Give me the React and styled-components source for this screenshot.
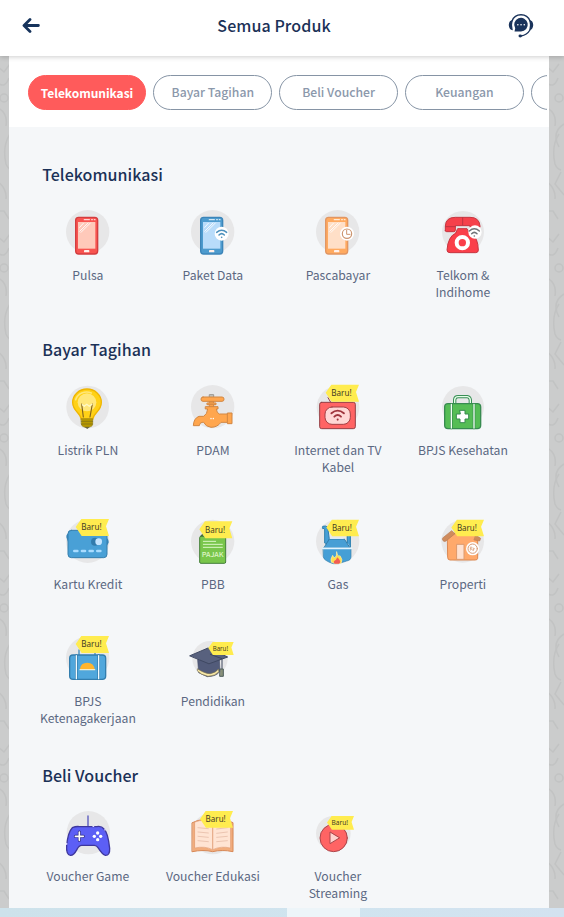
import React from "react";
import styled, { createGlobalStyle } from "styled-components";

const GlobalStyle = createGlobalStyle`
  * { box-sizing: border-box; }
  html, body { margin: 0; padding: 0; overflow: hidden; }
  body { font-family: "Noto Sans CJK SC", "Open Sans", sans-serif; background: #cbcccc; }
`;

const Page = styled.div`
  display: flex;
  flex-direction: column;
  width: 564px;
  height: 917px;
  overflow: hidden;
`;

const Header = styled.header`
  display: flex;
  flex: none;
  align-items: center;
  justify-content: space-between;
  height: 56px;
  padding: 0 30px 6px 22px;
  background: #fff;
  box-shadow: 0 1px 5px rgba(0, 0, 0, 0.2);
  z-index: 1;
`;

const HeaderTitle = styled.h1`
  margin: 0;
  font-size: 16px;
  font-weight: 500;
  line-height: 24px;
  letter-spacing: 0.08px;
  color: #1b3157;
`;

const Body = styled.div`
  display: grid;
  grid-template-columns: 9px 540px 15px;
  flex: none;
  height: 852px;
  overflow: hidden;
`;

const Doodles = styled.svg`
  display: block;
  width: 100%;
  height: 852px;
  fill: none;
  stroke: #c2c3c3;
  stroke-width: 1.5;
`;

const Content = styled.main`
  height: 852px;
  overflow: hidden;
  background: #f5f7f9;
`;

const Tabs = styled.nav`
  display: flex;
  gap: 7px;
  height: 71px;
  padding: 19px 0 0 18.6px;
  border-right: 2px solid #fff;
  background: #fff;
  overflow: hidden;
`;

const Tab = styled.button`
  flex: none;
  width: 118.8px;
  height: 35px;
  padding: 0;
  border: 1px solid ${(p) => (p.$active ? "#ff5b5b" : "#8694a5")};
  border-radius: 18px;
  background: ${(p) => (p.$active ? "#ff5b5b" : "#fff")};
  color: ${(p) => (p.$active ? "#fff" : "#8b98ab")};
  font-family: inherit;
  font-size: ${(p) => (p.$active ? "12px" : "12.2px")};
  font-weight: ${(p) => (p.$active ? 700 : 500)};
  letter-spacing: ${(p) => (p.$active ? "-0.05px" : "0")};
  line-height: 33px;
`;

const Section = styled.section`
  padding: 36px 15px 0 16.4px;
  &:first-of-type { padding-top: 35px; }
`;

const SectionTitle = styled.h2`
  margin: 0 0 24px 16.8px;
  font-size: 16px;
  font-weight: 500;
  line-height: 24px;
  letter-spacing: 0.04px;
  color: #1b3157;
`;

const Grid = styled.div`
  display: grid;
  grid-template-columns: repeat(4, 125px);
  row-gap: 43px;
`;

const Item = styled.div`
  display: flex;
  flex-direction: column;
  align-items: center;
  gap: 13px;
`;

const Picture = styled.svg`
  display: block;
  width: 60px;
  height: 44px;
  overflow: visible;
  fill: none;
  stroke-linejoin: round;
  stroke-linecap: round;
`;

const BadgeText = styled.text`
  font-family: "Noto Sans", "Open Sans", sans-serif;
  fill: #3f3b26;
  stroke: none;
`;

const TaxText = styled.text`
  font-family: "Noto Sans CJK SC", sans-serif;
  font-weight: 500;
  fill: #dff5c6;
`;

const Label = styled.div`
  width: 112px;
  font-size: 12.2px;
  line-height: 17px;
  text-align: center;
  white-space: pre-line;
  color: #5b6882;
`;

const BottomBar = styled.footer`
  display: grid;
  grid-template-columns: 287px 73px 1fr;
  flex: none;
  height: 9px;
  background: linear-gradient(90deg, #cde2eb, #d0e4ef 60%, #d3e2f0);
`;

const BottomThumb = styled.div`
  grid-column: 2;
  background: #edf5f9;
`;

const Disc = ({ cx = 173, cy = 95, r = 65 }) => <circle cx={cx} cy={cy} r={r} fill="#e7e7e8" />;

const Badge = ({ x, y, s = 1 }) => (
  <g transform={`translate(${x} ${y}) scale(${s})`}>
    <path d="M17 0H100L91 22L100 51H18L0 24Z" fill="#ffec4f" />
    <BadgeText x="17" y="34" fontSize="25.5" textLength="61" lengthAdjust="spacingAndGlyphs">Baru!</BadgeText>
  </g>
);

const Phone = ({ dark, edge, glass, x = 0 }) => (
  <g transform={`translate(${x} 0)`}>
    <rect x="137" y="52" width="66" height="110" rx="9" fill={edge} stroke={dark} strokeWidth="4" />
    <path d="M144 66H196V146H144Z" fill={glass} />
    <path d="M163 59H178M185 59H187M193 59H195" stroke="#fff" strokeWidth="4" opacity=".75" />
    <path d="M149 82L160 70M149 94L174 69M153 97L181 69" stroke="#fff" strokeWidth="3" opacity=".85" />
    <rect x="162" y="150" width="16" height="7" rx="2" fill="#fff0eb" />
  </g>
);

const Wifi = ({ x, y, color, s = 1, w = 4.5 }) => (
  <g transform={`translate(${x} ${y}) scale(${s})`} stroke={color} strokeWidth={w}>
    <path d="M-15 -4Q0 -17 15 -4M-8 4Q0 -4 8 4" />
    <circle cx="0" cy="11" r="2.5" fill={color} stroke="none" />
  </g>
);

const PhoneArt = () => (
  <Picture viewBox="84 30 180 132">
    <Disc />
    <Phone dark="#d33d3f" edge="#f85450" glass="#ffc9ba" />
  </Picture>
);

const DataArt = () => (
  <Picture viewBox="459 30 180 132">
    <Disc cx={548} />
    <Phone x={375} dark="#3c85b9" edge="#4d9bce" glass="#b9dcfa" />
    <circle cx="575" cy="101" r="21" fill="#fff" />
    <Wifi x={575} y={101} color="#4d91bd" />
  </Picture>
);

const PostpaidArt = () => (
  <Picture viewBox="84 30 180 132">
    <Disc />
    <Phone dark="#e19663" edge="#ffaa60" glass="#ffdfc7" />
    <circle cx="201" cy="101" r="21" fill="#fff" />
    <circle cx="201" cy="101" r="14" stroke="#cc946f" strokeWidth="3.5" />
    <path d="M200 91V103H210" stroke="#cc946f" strokeWidth="3" />
  </Picture>
);

const TelephoneArt = () => (
  <Picture viewBox="459 30 180 132">
    <Disc cx={549} cy={96} r={63} />
    <path d="M534 86H561Q563 96 574 101Q594 112 595 150Q595 158 587 158H510Q501 158 501 150Q504 110 526 100Z" fill="#fa3f4a" stroke="#c63540" strokeWidth="3" />
    <path d="M496 92V78Q497 52 526 52H570Q598 52 600 78V82H570V77H526V91Q526 95 521 95H500Q496 95 496 92Z" fill="#f6414b" stroke="#c63540" strokeWidth="3" />
    <path d="M548 53V75M497 80H526" stroke="#bd3540" strokeWidth="3" />
    <circle cx="547" cy="128" r="17" fill="#fa3f4a" stroke="#fff" strokeWidth="12" />
    <circle cx="585" cy="96" r="20" fill="#fff" />
    <Wifi x={583} y={97} color="#6f7478" />
  </Picture>
);

const BulbArt = () => (
  <Picture viewBox="84 150 180 132">
    <Disc cy={216} r={64} />
    <path d="M154 253C152 233 128 230 128 202A43 40 0 0 1 214 202C214 230 190 233 188 253Z" fill="#ffd116" stroke="#efb500" strokeWidth="4" />
    <path d="M137 194A34 31 0 0 1 184 174" stroke="#ffe67a" strokeWidth="5" />
    <ellipse cx="171" cy="202" rx="28" ry="27" fill="#ffe77b" />
    <path d="M160 246L155 207M180 246L187 207" stroke="#816221" strokeWidth="3.5" />
    <path d="M157 209L163 214L170 208L178 214L186 208" stroke="#fff8c6" strokeWidth="4" />
    <path d="M154 251H188V268Q187 275 179 276H163Q155 275 154 268Z" fill="#b79900" stroke="#958116" strokeWidth="2" />
    <path d="M154 259H188M154 267H187" stroke="#786b1c" strokeWidth="2" />
    <path d="M163 276H179L172 282Z" fill="#69653b" />
  </Picture>
);

const TapArt = () => (
  <Picture viewBox="459 150 180 132">
    <Disc cx={548} cy={215} />
    <g fill="#ffa64e" stroke="#d28743" strokeWidth="3">
      <path d="M539 179H551V191H539Z" fill="#c4c3bd" stroke="#9b9690" />
      <path d="M539 198H551V217H539Z" />
      <rect x="513" y="186" width="69" height="13" rx="6" />
      <path d="M532 204H558V209H532Z" />
      <path d="M527 215H564V222H559Q560 234 568 237H592V234H606V266H592V262H573Q562 277 543 277Q527 275 521 262H516Q508 264 508 272H490Q491 250 507 244H521Q532 237 533 222H527Z" />
      <path d="M592 238V262" />
    </g>
    <path d="M543 250V251M550 250V251" stroke="#fff" strokeWidth="4" />
  </Picture>
);

const InternetArt = () => (
  <Picture viewBox="84 30 180 132">
    <Disc cx={174} cy={97} r={64} />
    <rect x="119" y="82" width="107" height="79" rx="6" fill="#ff6464" stroke="#933f45" strokeWidth="3" />
    <rect x="135" y="96" width="76" height="52" rx="21" fill="#ffd7d5" stroke="#a54044" strokeWidth="3" />
    <Wifi x={173} y={120} color="#9e343c" s={1.25} />
    <path d="M151 80L144 68" stroke="#933f45" strokeWidth="3" />
    <Badge x={137} y={29} />
  </Picture>
);

const HealthArt = () => (
  <Picture viewBox="459 30 180 132">
    <Disc cx={549} cy={96} r={63} />
    <path d="M524 86V74Q525 65 534 65H562Q570 66 571 75V86" stroke="#398e55" strokeWidth="10" />
    <path d="M524 86V74Q525 65 534 65H562Q570 66 571 75V86" stroke="#e6ffe9" strokeWidth="4" />
    <rect x="494" y="86" width="108" height="75" rx="10" fill="#55bd55" stroke="#378b50" strokeWidth="4" />
    <path d="M514 88V159M582 88V159" stroke="#378b50" strokeWidth="8" />
    <path d="M514 88V159M582 88V159" stroke="#effff0" strokeWidth="4" />
    <path d="M540 106H555V117H566V132H555V143H540V132H529V117H540Z" fill="#fff" stroke="#378b50" strokeWidth="3" />
  </Picture>
);

const CardArt = () => (
  <Picture viewBox="84 27 180 132">
    <Disc cy={94} />
    <path d="M120 70Q108 70 109 82L120 112ZM227 82Q237 88 236 98L228 112Z" fill="#3687bd" />
    <rect x="114" y="61" width="117" height="82" rx="10" fill="#49a0d6" stroke="#367eac" strokeWidth="3" />
    <circle cx="195" cy="95" r="12" fill="#327cad" />
    <circle cx="206" cy="95" r="10" fill="#c6e5ff" />
    <path d="M133 123H142M156 123H165M179 123H188M202 123H211" stroke="#a9dcff" strokeWidth="8" />
    <Badge x={137} y={27} />
  </Picture>
);

const TaxArt = () => (
  <Picture viewBox="459 27 180 132">
    <Disc cx={548} cy={94} />
    <path d="M509 80L517 71L523 80" fill="#45643a" />
    <rect x="509" y="79" width="78" height="81" rx="4" fill="#79c64b" stroke="#45803b" strokeWidth="3" />
    <path d="M520 94H557M520 103H577M520 112H577" stroke="#ddf6c7" strokeWidth="3" />
    <TaxText x="515" y="141" fontSize="20" textLength="66" lengthAdjust="spacingAndGlyphs">PAJAK</TaxText>
    <Badge x={508} y={34} s={0.99} />
  </Picture>
);

const GasArt = () => (
  <Picture viewBox="84 27 180 132">
    <Disc cy={94} />
    <path d="M134 98V57Q134 54 128 56V49Q137 46 143 51L148 88L142 105Z" fill="#459fd6" stroke="#2f7fad" strokeWidth="3" />
    <path d="M202 98V70H211V110" fill="#459fd6" stroke="#3687b5" strokeWidth="4" />
    <path d="M149 87H193L211 115H132Z" fill="#479fd5" stroke="#337eaa" strokeWidth="3" />
    <path d="M130 114H213V140Q213 151 200 153L175 161H159Q130 151 130 141Z" fill="#459fd6" stroke="#337eaa" strokeWidth="2" />
    <path d="M128 115H215" stroke="#e2f5ff" strokeWidth="5" />
    <path d="M151 85H190" stroke="#d9eafa" strokeWidth="4" />
    <path d="M170 126Q174 143 180 137Q190 150 183 160Q167 164 154 157Q150 148 158 136Q161 145 165 143Q171 138 170 126Z" fill="#ffdf4f" stroke="#ffefab" strokeWidth="2" />
    <path d="M172 142Q187 156 177 161H164Q157 154 168 149Z" fill="#f15d55" />
    <Badge x={139} y={29} s={0.98} />
  </Picture>
);

const PropertyArt = () => (
  <Picture viewBox="459 27 180 132">
    <Disc cx={548} cy={94} r={64} />
    <path d="M503 83L548 54L593 83V145Q593 150 585 150H510Q503 150 503 143Z" fill="#ffa96b" stroke="#dc8851" strokeWidth="3" />
    <path d="M488 84L515 62L525 71L498 93Q492 97 488 91ZM588 76L602 85L599 93L583 90Z" fill="#cf8b5c" stroke="#b57c54" strokeWidth="2" />
    <path d="M531 103H552V148H531Z" fill="#ffe1d0" stroke="#dd9b70" strokeWidth="3" />
    <circle cx="578" cy="116" r="20" fill="#fff" />
    <circle cx="578" cy="116" r="14" stroke="#d89b75" strokeWidth="3" />
    <path d="M571 121V111H575Q580 114 571 116L579 121M580 121V114Q588 115 580 120" stroke="#d89b75" strokeWidth="2" />
    <Badge x={514} y={29} s={0.98} />
  </Picture>
);

const EmploymentArt = () => (
  <Picture viewBox="84 33 180 132">
    <Disc cy={99} />
    <path d="M147 91V75M195 91V78" stroke="#418ebd" strokeWidth="4" />
    <rect x="119" y="90" width="108" height="73" rx="10" fill="#50a7dc" stroke="#337eae" strokeWidth="4" />
    <path d="M139 92V161M206 92V161" stroke="#327eae" strokeWidth="8" />
    <path d="M139 92V161M206 92V161" stroke="#f2fbff" strokeWidth="4" />
    <path d="M150 132Q152 113 172 113Q192 114 194 132Z" fill="#ffb52e" />
    <path d="M150 134H194" stroke="#f5edc9" strokeWidth="4" />
    <Badge x={137} y={33} />
  </Picture>
);

const EducationArt = () => (
  <Picture viewBox="459 33 180 132">
    <Disc cx={540} cy={101} r={53} />
    <path d="M503 104L506 143Q520 150 532 155Q558 155 570 139L568 104Z" fill="#525b7a" stroke="#434b66" strokeWidth="2" />
    <path d="M503 132Q527 147 541 146Q558 143 565 132L567 140Q556 153 534 154Q512 149 503 139Z" fill="#f9e9a7" stroke="#776f54" strokeWidth="2" />
    <path d="M480 92L534 69L593 96L538 116Z" fill="#58617e" stroke="#3f4862" strokeWidth="3" />
    <path d="M541 88L576 101V132" stroke="#3d465d" strokeWidth="3" />
    <path d="M571 132H580V154H570Z" fill="#89917a" stroke="#4f5e5d" strokeWidth="3" />
    <Badge x={535} y={51} s={0.76} />
  </Picture>
);

const GameArt = () => (
  <Picture viewBox="84 153 180 132">
    <Disc cx={175} cy={218} />
    <path d="M174 168V200" stroke="#5757bd" strokeWidth="4" />
    <path d="M127 203Q139 198 149 200H200Q214 197 222 207Q234 218 239 265Q240 287 226 286Q218 285 204 263Q200 256 193 256H155Q147 256 141 268Q131 287 121 286Q108 284 110 256Q114 216 127 203Z" fill="#5c5ff5" stroke="#3e379e" strokeWidth="4" />
    <path d="M148 216V241M136 229H160" stroke="#29277e" strokeWidth="9" />
    <path d="M148 216V241M136 229H160" stroke="#fff" strokeWidth="5" />
    <g fill="#fff"><circle cx="203" cy="219" r="5" /><circle cx="193" cy="229" r="5" /><circle cx="212" cy="229" r="5" /><circle cx="203" cy="239" r="5" /></g>
    <path d="M110 250V253M225 208V210M189 199H191" stroke="#dad9ff" strokeWidth="4" />
  </Picture>
);

const BookArt = () => (
  <Picture viewBox="459 153 180 132">
    <Disc cx={548} cy={220} r={63} />
    <path d="M487 188Q522 170 548 187Q576 170 609 188V275Q575 268 548 275Q521 268 487 275Z" fill="#f2ad7d" stroke="#d88958" strokeWidth="3" />
    <path d="M495 186Q525 174 548 189V269Q524 257 495 264ZM601 186Q574 176 548 189V269Q573 257 601 264Z" fill="#ffe4d3" stroke="#e2a17b" strokeWidth="2" />
    <path d="M504 203L535 206M504 216L535 219M504 229L535 232M504 242L535 245M560 207L592 203M560 220L592 216M560 232L592 229M560 245L592 242" stroke="#ecc5b1" strokeWidth="3" />
    <Badge x={510} y={153} s={0.99} />
  </Picture>
);

const StreamingArt = () => (
  <Picture viewBox="114 63 180 132">
    <Disc cx={190} cy={130} r={52} />
    <circle cx="191" cy="144" r="41" fill="#ff6464" stroke="#aa474c" strokeWidth="3" />
    <path d="M180 127V161L208 144Z" fill="#ffd2ce" stroke="#aa474c" strokeWidth="3" />
    <Badge x={171} y={78} s={0.81} />
  </Picture>
);

const BackIcon = () => (
  <svg width="18" height="16" viewBox="0 0 18 16" fill="none" stroke="#17345c" strokeWidth="2.8" strokeLinecap="round" strokeLinejoin="round">
    <path d="M8 2.5L2 8.5L8 14.5M2.4 8.5H16.4" />
  </svg>
);

const SupportIcon = () => (
  <svg width="26" height="25" viewBox="0 0 26 25" fill="none" stroke="#1a335b" strokeLinecap="round">
    <path d="M4 8A9.6 9.6 0 0 1 22 8M22 17Q19 22 13 23" strokeWidth="1.3" />
    <path d="M4 7.8Q1.8 8 1.4 12Q1.8 16 4 16.4Q2.8 12 4 7.8ZM22 7.8Q24.2 8 24.6 12Q24.2 16 22 16.4Q23.2 12 22 7.8Z" fill="#1a335b" strokeWidth="1.3" />
    <path d="M6.5 18.4L7.2 15.2A6.8 6.8 0 1 1 13 18.4Z" fill="#1a335b" stroke="none" />
    <path d="M9.8 11.7H9.9M13 11.7H13.1M16.2 11.7H16.3" stroke="#fff" strokeWidth="1.5" />
    <ellipse cx="12.2" cy="23" rx="1.7" ry="1.4" fill="#1a335b" stroke="none" />
  </svg>
);

const doodleRows = [0, 170, 340, 510, 680];

const DoodleStrip = ({ width }) => (
  <Doodles viewBox={`0 0 ${width} 852`}>
    {doodleRows.map((y) => (
      <g key={y} transform={`translate(0 ${y})`}>
        <path d="M-3 10L4 16L10 8M-2 27Q5 33 9 22M-2 52Q8 57 6 70M10 78Q2 90 6 108Q8 113 12 114M-3 125Q7 132 6 143M-2 155H4L9 163" />
        <circle cx={width - 5} cy="42" r="4" />
        {width > 10 && (
          <path d={`M${width} 68Q${width - 13} 76 ${width - 5} 91M${width - 3} 116L${width - 9} 128L${width} 139`} />
        )}
      </g>
    ))}
  </Doodles>
);

const tabs = ["Telekomunikasi", "Bayar Tagihan", "Beli Voucher", "Keuangan", ""];

const sections = [
  {
    title: "Telekomunikasi",
    items: [
      ["Pulsa", PhoneArt],
      ["Paket Data", DataArt],
      ["Pascabayar", PostpaidArt],
      ["Telkom &\nIndihome", TelephoneArt],
    ],
  },
  {
    title: "Bayar Tagihan",
    items: [
      ["Listrik PLN", BulbArt],
      ["PDAM", TapArt],
      ["Internet dan TV\nKabel", InternetArt],
      ["BPJS Kesehatan", HealthArt],
      ["Kartu Kredit", CardArt],
      ["PBB", TaxArt],
      ["Gas", GasArt],
      ["Properti", PropertyArt],
      ["BPJS\nKetenagakerjaan", EmploymentArt],
      ["Pendidikan", EducationArt],
    ],
  },
  {
    title: "Beli Voucher",
    items: [
      ["Voucher Game", GameArt],
      ["Voucher Edukasi", BookArt],
      ["Voucher\nStreaming", StreamingArt],
    ],
  },
];

export default function App() {
  return (
    <Page>
      <GlobalStyle />
      <Header>
        <BackIcon />
        <HeaderTitle>Semua Produk</HeaderTitle>
        <SupportIcon />
      </Header>
      <Body>
        <DoodleStrip width={9} />
        <Content>
          <Tabs>
            {tabs.map((name, i) => (
              <Tab key={i} $active={i === 0}>{name}</Tab>
            ))}
          </Tabs>
          {sections.map((section) => (
            <Section key={section.title}>
              <SectionTitle>{section.title}</SectionTitle>
              <Grid>
                {section.items.map(([name, Art]) => (
                  <Item key={name}>
                    <Art />
                    <Label>{name}</Label>
                  </Item>
                ))}
              </Grid>
            </Section>
          ))}
        </Content>
        <DoodleStrip width={15} />
      </Body>
      <BottomBar>
        <BottomThumb />
      </BottomBar>
    </Page>
  );
}
